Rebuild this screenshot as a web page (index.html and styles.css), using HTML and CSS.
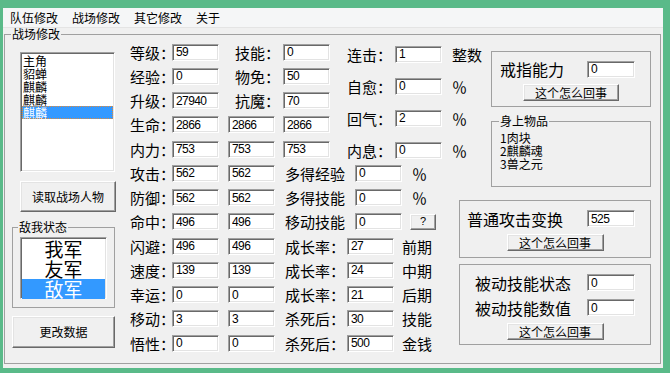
FILE: index.html
```html
<!DOCTYPE html>
<html lang="zh-CN">
<head>
<meta charset="utf-8">
<title>战场修改</title>
<link rel="stylesheet" href="styles.css">
</head>
<body>
<div class="window">
  <div class="menubar">
    <span class="menu-item">队伍修改</span>
    <span class="menu-item">战场修改</span>
    <span class="menu-item">其它修改</span>
    <span class="menu-item">关于</span>
  </div>
  <fieldset class="group main">
    <legend class="main-legend">战场修改</legend>
    <div class="layout">
      <div class="col-left">
        <div class="listbox roles">
          <div class="li">主角</div>
          <div class="li">貂蝉</div>
          <div class="li">麒麟</div>
          <div class="li">麒麟</div>
          <div class="li sel">麒麟</div>
        </div>
        <button class="btn btn-read">读取战场人物</button>
        <fieldset class="group sides-group">
          <legend class="small-legend">敌我状态</legend>
          <div class="listbox sides">
            <div class="li big">我军</div>
            <div class="li big">友军</div>
            <div class="li big sel2">敌军</div>
          </div>
        </fieldset>
        <button class="btn btn-apply">更改数据</button>
      </div>

      <div class="col-mid">
        <div class="top-block">
          <div class="sub-a">
            <div class="row">
              <span class="l1">等级：</span><input class="tb" value="59">
              <span class="l2">技能：</span><input class="tb" value="0">
            </div>
            <div class="row">
              <span class="l1">经验：</span><input class="tb" value="0">
              <span class="l2">物免：</span><input class="tb" value="50">
            </div>
            <div class="row">
              <span class="l1">升级：</span><input class="tb" value="27940">
              <span class="l2">抗魔：</span><input class="tb" value="70">
            </div>
            <div class="row">
              <span class="l1">生命：</span><input class="tb" value="2866">
              <input class="tb gap9" value="2866"><input class="tb gap8" value="2866">
            </div>
            <div class="row">
              <span class="l1">内力：</span><input class="tb" value="753">
              <input class="tb gap9" value="753"><input class="tb gap8" value="753">
            </div>
          </div>
          <div class="sub-b">
            <div class="row-b"><span class="l3">连击：</span><input class="tb" value="1"><span class="unit-b">整数</span></div>
            <div class="row-b"><span class="l3">自愈：</span><input class="tb" value="0"><span class="unit-b">％</span></div>
            <div class="row-b"><span class="l3">回气：</span><input class="tb" value="2"><span class="unit-b">％</span></div>
            <div class="row-b"><span class="l3">内息：</span><input class="tb" value="0"><span class="unit-b">％</span></div>
          </div>
        </div>

        <div class="row">
          <span class="l1">攻击：</span><input class="tb" value="562"><input class="tb gap9" value="562">
          <span class="l4">多得经验</span><input class="tb" value="0"><span class="unit-c">％</span>
        </div>
        <div class="row">
          <span class="l1">防御：</span><input class="tb" value="562"><input class="tb gap9" value="562">
          <span class="l4">多得技能</span><input class="tb" value="0"><span class="unit-c">％</span>
        </div>
        <div class="row">
          <span class="l1">命中：</span><input class="tb" value="496"><input class="tb gap9" value="496">
          <span class="l4">移动技能</span><input class="tb" value="0"><button class="btn btn-q">?</button>
        </div>
        <div class="row">
          <span class="l1">闪避：</span><input class="tb" value="496"><input class="tb gap9" value="496">
          <span class="l5">成长率：</span><input class="tb" value="27"><span class="unit-d">前期</span>
        </div>
        <div class="row">
          <span class="l1">速度：</span><input class="tb" value="139"><input class="tb gap9" value="139">
          <span class="l5">成长率：</span><input class="tb" value="24"><span class="unit-d">中期</span>
        </div>
        <div class="row">
          <span class="l1">幸运：</span><input class="tb" value="0"><input class="tb gap9" value="0">
          <span class="l5">成长率：</span><input class="tb" value="21"><span class="unit-d">后期</span>
        </div>
        <div class="row">
          <span class="l1">移动：</span><input class="tb" value="3"><input class="tb gap9" value="3">
          <span class="l5">杀死后：</span><input class="tb" value="30"><span class="unit-d">技能</span>
        </div>
        <div class="row">
          <span class="l1">悟性：</span><input class="tb" value="0"><input class="tb gap9" value="0">
          <span class="l5">杀死后：</span><input class="tb" value="500"><span class="unit-d">金钱</span>
        </div>
      </div>

      <div class="col-right">
        <div class="panel p1">
          <div class="prow"><span class="ptext">戒指能力</span><input class="tb tbr" value="0"></div>
          <button class="btn btn-small">这个怎么回事</button>
        </div>
        <fieldset class="group p2">
          <legend class="small-legend items-legend">身上物品</legend>
          <div class="items">
            <div class="item">1肉块</div>
            <div class="item">2麒麟魂</div>
            <div class="item">3兽之元</div>
          </div>
        </fieldset>
        <div class="panel p3">
          <div class="prow"><span class="ptext">普通攻击变换</span><input class="tb tbr" value="525"></div>
          <button class="btn btn-small">这个怎么回事</button>
        </div>
        <div class="panel p4">
          <div class="prow"><span class="ptext">被动技能状态</span><input class="tb tbr" value="0"></div>
          <div class="prow prow2"><span class="ptext">被动技能数值</span><input class="tb tbr" value="0"></div>
          <button class="btn btn-small">这个怎么回事</button>
        </div>
      </div>
    </div>
  </fieldset>
</div>
</body>
</html>
```

FILE: styles.css
```css
* { box-sizing: border-box; }

html, body {
  margin: 0;
  padding: 0;
}

body {
  background: #5aba89;
  width: 670px;
  height: 373px;
  overflow: hidden;
  padding: 8px 0 0 3px;
  font-family: "Noto Sans CJK SC", "Noto Sans", sans-serif;
  color: #000;
}

.window {
  width: 660px;
  height: 360px;
  background: #f0f0f0;
}

.menubar {
  display: flex;
  height: 20px;
  background: #f5f6f7;
  border-bottom: 1px solid #e4e4e4;
  font-size: 12px;
  line-height: 19px;
}

.menu-item {
  padding: 0 7px;
}

/* group boxes */
.group {
  margin: 0;
  padding: 0;
  border: 1px solid #a0a0a0;
  min-width: 0;
}

.main {
  margin: 0 0 0 1px;
  width: 657px;
  height: 336px;
}

.main-legend {
  font-size: 12px;
  line-height: 12px;
  margin-left: 6px;
  padding: 0 1px;
}

.small-legend {
  font-size: 12px;
  line-height: 12px;
  margin-left: 5px;
  padding: 0 1px;
}

.layout {
  display: flex;
  padding: 0 8px 0 7px;
}

/* left column */
.col-left {
  width: 104px;
  margin-right: 14px;
  display: flex;
  flex-direction: column;
}

.listbox {
  background: #fff;
  border: 1px solid;
  border-color: #a0a0a0 #fff #fff #a0a0a0;
  box-shadow: inset 1px 1px 0 #696969, inset -1px -1px 0 #e3e3e3;
}

.roles {
  margin: 12px 0 0 8px;
  width: 95px;
  height: 120px;
  padding: 1px 0 0 1px;
  font-size: 12px;
}

.li {
  height: 13px;
  line-height: 13px;
  padding-left: 1px;
  white-space: nowrap;
}

.sel {
  background: #3399ff;
  color: #fff;
  outline: 1px dotted #e08a3a;
  outline-offset: -1px;
  margin-right: 1px;
}

.btn {
  font-family: "Noto Sans CJK SC", sans-serif;
  font-size: 12px;
  color: #000;
  background: #f0f0f0;
  border: 1px solid;
  border-color: #fff #696969 #696969 #fff;
  box-shadow: inset -1px -1px 0 #a0a0a0, inset 1px 1px 0 #e3e3e3;
  padding: 0;
  margin: 0;
  line-height: 1;
}

.btn-read {
  margin: 9px 0 0 8px;
  width: 96px;
  height: 31px;
}

.sides-group {
  margin-top: 9px;
  width: 103px;
  height: 87px;
}

.sides {
  margin: 4px 0 0 7px;
  width: 87px;
  height: 62px;
  padding: 1px;
}

.big {
  height: 20px;
  line-height: 20px;
  font-size: 19px;
  text-align: center;
  padding: 0;
}

.sel2 {
  background: #3399ff;
  color: #fff;
}

.btn-apply {
  margin-top: 8px;
  width: 103px;
  height: 32px;
}

/* middle column */
.col-mid {
  width: 329px;
  flex: none;
}

.top-block {
  display: flex;
}

.sub-a {
  width: 200px;
  flex: none;
}

.row {
  display: flex;
  align-items: center;
  height: 24.25px;
  white-space: nowrap;
}

.l1, .l2, .l3, .l4, .l5 {
  font-size: 15px;
  line-height: 17px;
  white-space: nowrap;
  flex: none;
  overflow: visible;
}

.l1 { width: 42px; }
.l2 { width: 64px; padding-left: 16px; }
.l4 { width: 80px; padding-left: 10px; }
.l5 { width: 72px; padding-left: 10px; }

.tb {
  flex: none;
  width: 47px;
  height: 17px;
  margin: 0;
  padding: 0 0 0 3px;
  background: #fff;
  border: 1px solid;
  border-color: #a0a0a0 #fff #fff #a0a0a0;
  box-shadow: inset 1px 1px 0 #696969, inset -1px -1px 0 #e3e3e3;
  font-family: "Liberation Sans", Arial, sans-serif;
  font-size: 12px;
  letter-spacing: -0.6px;
  color: #000;
  outline: none;
}

.gap9 { margin-left: 9px; }
.gap8 { margin-left: 8px; }

.sub-b {
  display: flex;
  flex-direction: column;
  gap: 14px;
  padding: 5px 0 0 17px;
}

.row-b {
  display: flex;
  align-items: center;
  height: 18px;
  white-space: nowrap;
}

.l3 { width: 48px; }

.unit-b, .unit-c, .unit-d {
  font-size: 15px;
  line-height: 17px;
  white-space: nowrap;
}

.unit-b { padding-left: 10px; }
.unit-c { padding-left: 10px; }
.unit-d { padding-left: 8px; }

.btn-q {
  margin-left: 8px;
  width: 26px;
  height: 16px;
  font-family: "Liberation Sans", Arial, sans-serif;
  font-size: 11px;
}

/* right column */
.col-right {
  width: 192px;
  flex: none;
  display: flex;
  flex-direction: column;
  align-items: flex-end;
}

.panel {
  border: 1px solid #a0a0a0;
  display: flex;
  flex-direction: column;
  align-items: center;
}

.prow {
  display: flex;
  align-items: center;
  width: 100%;
  height: 17px;
}

.ptext {
  font-size: 16px;
  line-height: 18px;
  white-space: nowrap;
}

.tbr {
  width: 48px;
  margin-left: auto;
  margin-right: 15px;
}

.btn-small {
  width: 97px;
  height: 17px;
  margin-top: 7px;
}

.p1 {
  margin-top: 11px;
  width: 160px;
  height: 56px;
  padding-top: 8px;
}

.p1 .prow { padding-left: 8px; height: 18px; }
.p1 .btn-small { width: 96px; margin-top: 6px; }

.p2 {
  margin-top: 8px;
  width: 160px;
  height: 72px;
}

.items-legend { margin-left: 7px; }

.items {
  padding: 4px 0 0 8px;
  font-size: 12px;
}

.item {
  height: 13px;
  line-height: 13px;
  white-space: nowrap;
}

.p3 {
  margin-top: 13px;
  width: 192px;
  height: 58px;
  padding-top: 9px;
}

.p3 .prow { padding-left: 7px; }

.p4 {
  margin-top: 6px;
  width: 192px;
  height: 81px;
  padding-top: 9px;
}

.p4 .prow { padding-left: 15px; }
.p4 .prow2 { margin-top: 8px; }
```
